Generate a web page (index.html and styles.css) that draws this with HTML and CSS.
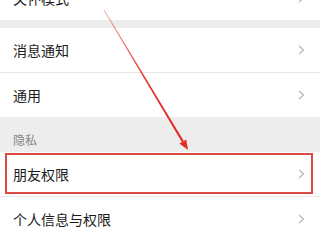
FILE: index.html
```html
<!DOCTYPE html>
<html lang="zh-CN">
<head>
  <meta charset="UTF-8" />
  <title>设置</title>
  <meta name="viewport" content="width=device-width, initial-scale=1.0" />
  <link rel="stylesheet" href="styles.css">
</head>
<body>

  <div class="screen">
    <div class="group top-group">
      <div class="row">
        <span class="label">关怀模式</span>
        <svg class="chevron" viewBox="0 0 7 10"><path d="M1 1 L5.5 5 L1 9" /></svg>
      </div>
    </div>

    <div class="gap"></div>

    <div class="group">
      <div class="row">
        <span class="label">消息通知</span>
        <svg class="chevron" viewBox="0 0 7 10"><path d="M1 1 L5.5 5 L1 9" /></svg>
      </div>
      <div class="row">
        <span class="label">通用</span>
        <svg class="chevron" viewBox="0 0 7 10"><path d="M1 1 L5.5 5 L1 9" /></svg>
      </div>
    </div>

    <div class="section-title">隐私</div>

    <div class="group">
      <div class="row">
        <span class="label">朋友权限</span>
        <svg class="chevron" viewBox="0 0 7 10"><path d="M1 1 L5.5 5 L1 9" /></svg>
      </div>
      <div class="row">
        <span class="label">个人信息与权限</span>
        <svg class="chevron" viewBox="0 0 7 10"><path d="M1 1 L5.5 5 L1 9" /></svg>
      </div>
    </div>

    <!-- 标注：红框和箭头 -->
    <div class="highlight"></div>
    <svg class="arrow" viewBox="0 0 320 240" width="320" height="240">
      <defs>
        <linearGradient id="fade" x1="104" y1="10" x2="188" y2="150" gradientUnits="userSpaceOnUse">
          <stop offset="0" stop-color="#e52d27" stop-opacity="0.45" />
          <stop offset="0.5" stop-color="#e52d27" stop-opacity="1" />
        </linearGradient>
      </defs>
      <polygon points="103.7,10.2 104.3,9.8 183.8,140.9 181.8,142.1" fill="url(#fade)" />
      <polygon points="188,150 179.4,143.6 186.2,139.4" fill="#e52d27" />
    </svg>
  </div>

</body>
</html>
```

FILE: styles.css
```css
body {
  margin: 0;
  background: #ededed;
  font-family: "Noto Sans CJK SC", "Noto Sans", sans-serif;
  color: #1a1a1a;
  overflow: hidden;
}
.screen {
  position: relative;
  width: 320px;
  height: 240px;
  overflow: hidden;
}
.top-group {
  margin-top: -24px;
}
.group {
  background: #fff;
}
.row {
  display: flex;
  align-items: center;
  justify-content: space-between;
  height: 44px;
  padding: 0 15px 0 13px;
  font-size: 14px;
}
.row + .row {
  border-top: 1px solid #e6e6e6;
}
.label {
  line-height: 20px;
}
.chevron {
  width: 7px;
  height: 10px;
  fill: none;
  stroke: #b5b5b5;
  stroke-width: 1.2;
}
.gap {
  height: 8px;
}
.section-title {
  height: 35px;
  box-sizing: border-box;
  display: flex;
  align-items: flex-end;
  padding: 0 13px 4px;
  font-size: 12px;
  line-height: 16px;
  color: #888;
}

/* 标注 */
.highlight {
  position: absolute;
  left: 5px;
  top: 153px;
  width: 308px;
  height: 41px;
  box-sizing: border-box;
  border: 2px solid #dc4a44;
}
.arrow {
  position: absolute;
  left: 0;
  top: 0;
}
```
